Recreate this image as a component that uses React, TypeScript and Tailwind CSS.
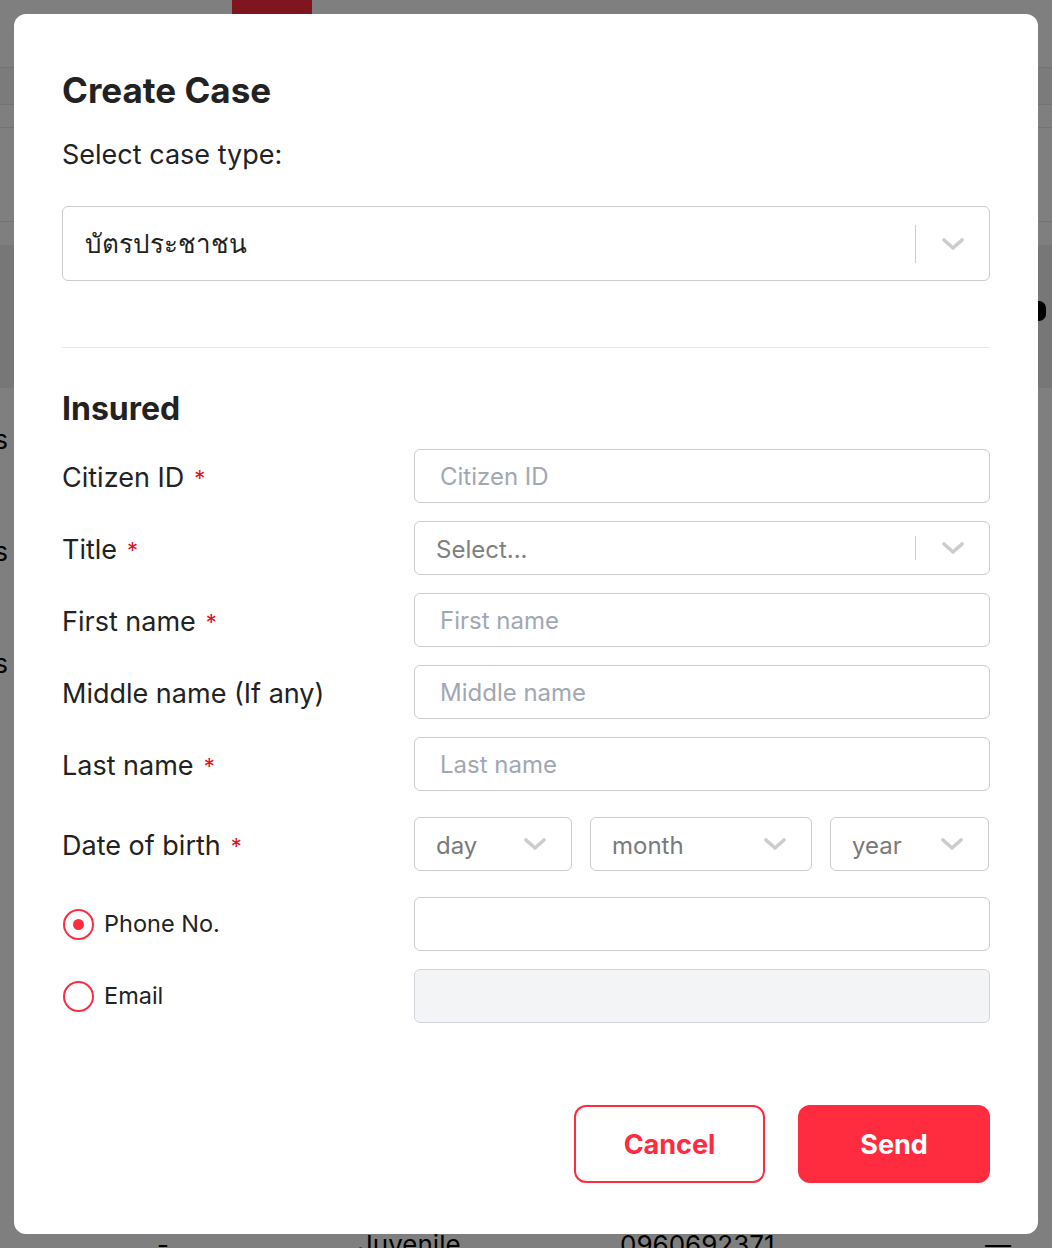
import type { ReactNode } from "react";

const FONT = "font-['Inter','Noto_Sans','DejaVu_Sans',sans-serif]";

function Chevron({ className = "" }: { className?: string }) {
  return (
    <svg
      viewBox="0 0 24 14"
      className={`h-[14px] w-[24px] ${className}`}
      fill="none"
      stroke="#cccccc"
      strokeWidth={3.6}
      strokeLinecap="round"
      strokeLinejoin="round"
      aria-hidden="true"
    >
      <polyline points="3,3 12,11 21,3" />
    </svg>
  );
}

function Label({ children, required }: { children: ReactNode; required?: boolean }) {
  return (
    <div className="flex w-[352px] shrink-0 items-center pt-[5px] text-[27px] text-[#222222]">
      {children}
      {required && <span className="ml-[10px] text-[22px] text-[#e3101f]">*</span>}
    </div>
  );
}

function TextInput({ placeholder }: { placeholder?: string }) {
  return (
    <div className="flex h-[54px] flex-1 items-center rounded-[6px] border border-[#cccccc] bg-white px-[25px] pt-px text-[24px] text-[#a1a7b3]">
      {placeholder}
    </div>
  );
}

function Row({ label, required, mt, children }: { label: ReactNode; required?: boolean; mt: string; children: ReactNode }) {
  return (
    <div className={`flex items-center ${mt}`}>
      <Label required={required}>{label}</Label>
      {children}
    </div>
  );
}

function DateSelect({ text, width }: { text: string; width: string }) {
  return (
    <div className={`flex h-[54px] ${width} items-center justify-between rounded-[6px] border border-[#cccccc] bg-white pl-[21px] pr-[24px] text-[24px] text-[#7a7a7a]`}>
      <span className="pt-[3px]">{text}</span>
      <Chevron />
    </div>
  );
}

function Radio({ checked, label }: { checked?: boolean; label: string }) {
  return (
    <div className="flex w-[352px] shrink-0 items-center gap-[10px] text-[23.5px] text-[#222222]">
      <span className="ml-px flex h-[31px] w-[31px] items-center justify-center rounded-full border-2 border-[#ff2b3f]">
        {checked && <span className="h-[11px] w-[11px] rounded-full bg-[#ff2b3f]" />}
      </span>
      {label}
    </div>
  );
}

function BackgroundPage() {
  return (
    <div className="flex h-[1248px] flex-col overflow-hidden bg-white text-[26px] text-black">
      <div className="h-[68px] border-b border-[#e6e6e6]">
        <div className="ml-[232px] flex h-[44px] w-[80px] items-end justify-center bg-[#ff2b3f] pb-[4px]">
          <span className="h-[22px] w-[22px] rounded-full bg-white/70" />
        </div>
      </div>
      <div className="h-[37px] border-b border-[#e6e6e6] bg-[#f6f6f6]" />
      <div className="h-[23px] border-b border-[#e6e6e6]" />
      <div className="h-[94px] border-b border-[#e6e6e6]" />
      <div className="h-[23px]" />
      <div className="flex h-[143px] items-center justify-end bg-[#eeeeee] pb-[12px]">
        <span className="mr-[6px] h-[20px] w-[14px] rounded-full bg-black" />
      </div>
      <div className="flex flex-col gap-[84px] pt-[38px]">
        {["Status", "Details", "Items"].map((t) => (
          <div key={t} className="flex h-[28px] w-[8px] justify-end overflow-hidden">
            <span className="leading-[28px]">{t}</span>
          </div>
        ))}
      </div>
      <div className="mt-auto flex h-[16px] items-start pt-[2px] leading-[22px]">
        <span className="ml-[157px] w-[201px]">-</span>
        <span className="w-[262px]">Juvenile</span>
        <span className="w-[365px]">0960692371</span>
        <span>—</span>
      </div>
    </div>
  );
}

export default function App() {
  return (
    <div className={`relative h-[1248px] w-[1052px] overflow-hidden ${FONT}`}>
      <BackgroundPage />
      <div className="absolute inset-0 bg-black/50 p-[14px]">
        <div className="flex h-full flex-col rounded-[12px] bg-white px-[48px] pt-[56px]">
          <h2 className="text-[35px] leading-[40px] font-bold text-[#222222]">Create Case</h2>
          <p className="mt-[29px] text-[27px] leading-[32px] text-[#222222]">Select case type:</p>

          <div className="mt-[35px] flex h-[75px] items-center rounded-[6px] border border-[#cccccc] bg-white pl-[22px] pr-[24px]">
            <span className="flex-1 text-[26px] text-[#222222]">บัตรประชาชน</span>
            <span className="mr-[25px] h-[38px] w-px bg-[#cccccc]" />
            <Chevron />
          </div>

          <div className="mt-[66px] border-t border-[#e5e7eb]" />

          <h3 className="mt-[43px] text-[32px] leading-[36px] font-bold text-[#222222]">Insured</h3>

          <Row label="Citizen ID" required mt="mt-[22px]">
            <TextInput placeholder="Citizen ID" />
          </Row>
          <Row label="Title" required mt="mt-[18px]">
            <div className="flex h-[54px] flex-1 items-center rounded-[6px] border border-[#cccccc] bg-white pl-[21px] pr-[24px]">
              <span className="flex-1 pt-[3px] text-[24px] text-[#808080]">Select...</span>
              <span className="mr-[25px] h-[24px] w-px bg-[#cccccc]" />
              <Chevron />
            </div>
          </Row>
          <Row label="First name" required mt="mt-[18px]">
            <TextInput placeholder="First name" />
          </Row>
          <Row label="Middle name (If any)" mt="mt-[18px]">
            <TextInput placeholder="Middle name" />
          </Row>
          <Row label="Last name" required mt="mt-[18px]">
            <TextInput placeholder="Last name" />
          </Row>
          <Row label="Date of birth" required mt="mt-[26px]">
            <div className="flex flex-1 gap-[18px]">
              <DateSelect text="day" width="w-[158px]" />
              <DateSelect text="month" width="w-[222px]" />
              <DateSelect text="year" width="w-[159px]" />
            </div>
          </Row>

          <div className="mt-[26px] flex items-center">
            <Radio checked label="Phone No." />
            <div className="h-[54px] flex-1 rounded-[6px] border border-[#cccccc] bg-white" />
          </div>
          <div className="mt-[18px] flex items-center">
            <Radio label="Email" />
            <div className="h-[54px] flex-1 rounded-[6px] border border-[#d1d5db] bg-[#f3f4f6]" />
          </div>

          <div className="mt-[82px] flex justify-end gap-[33px]">
            <button className="h-[78px] w-[191px] rounded-[12px] border-2 border-[#ff2b3f] bg-white pt-[2px] text-[27px] font-bold text-[#ff2b3f]">
              Cancel
            </button>
            <button className="h-[78px] w-[192px] rounded-[12px] bg-[#ff2b3f] pt-[2px] text-[27px] font-bold text-white">
              Send
            </button>
          </div>
        </div>
      </div>
    </div>
  );
}
